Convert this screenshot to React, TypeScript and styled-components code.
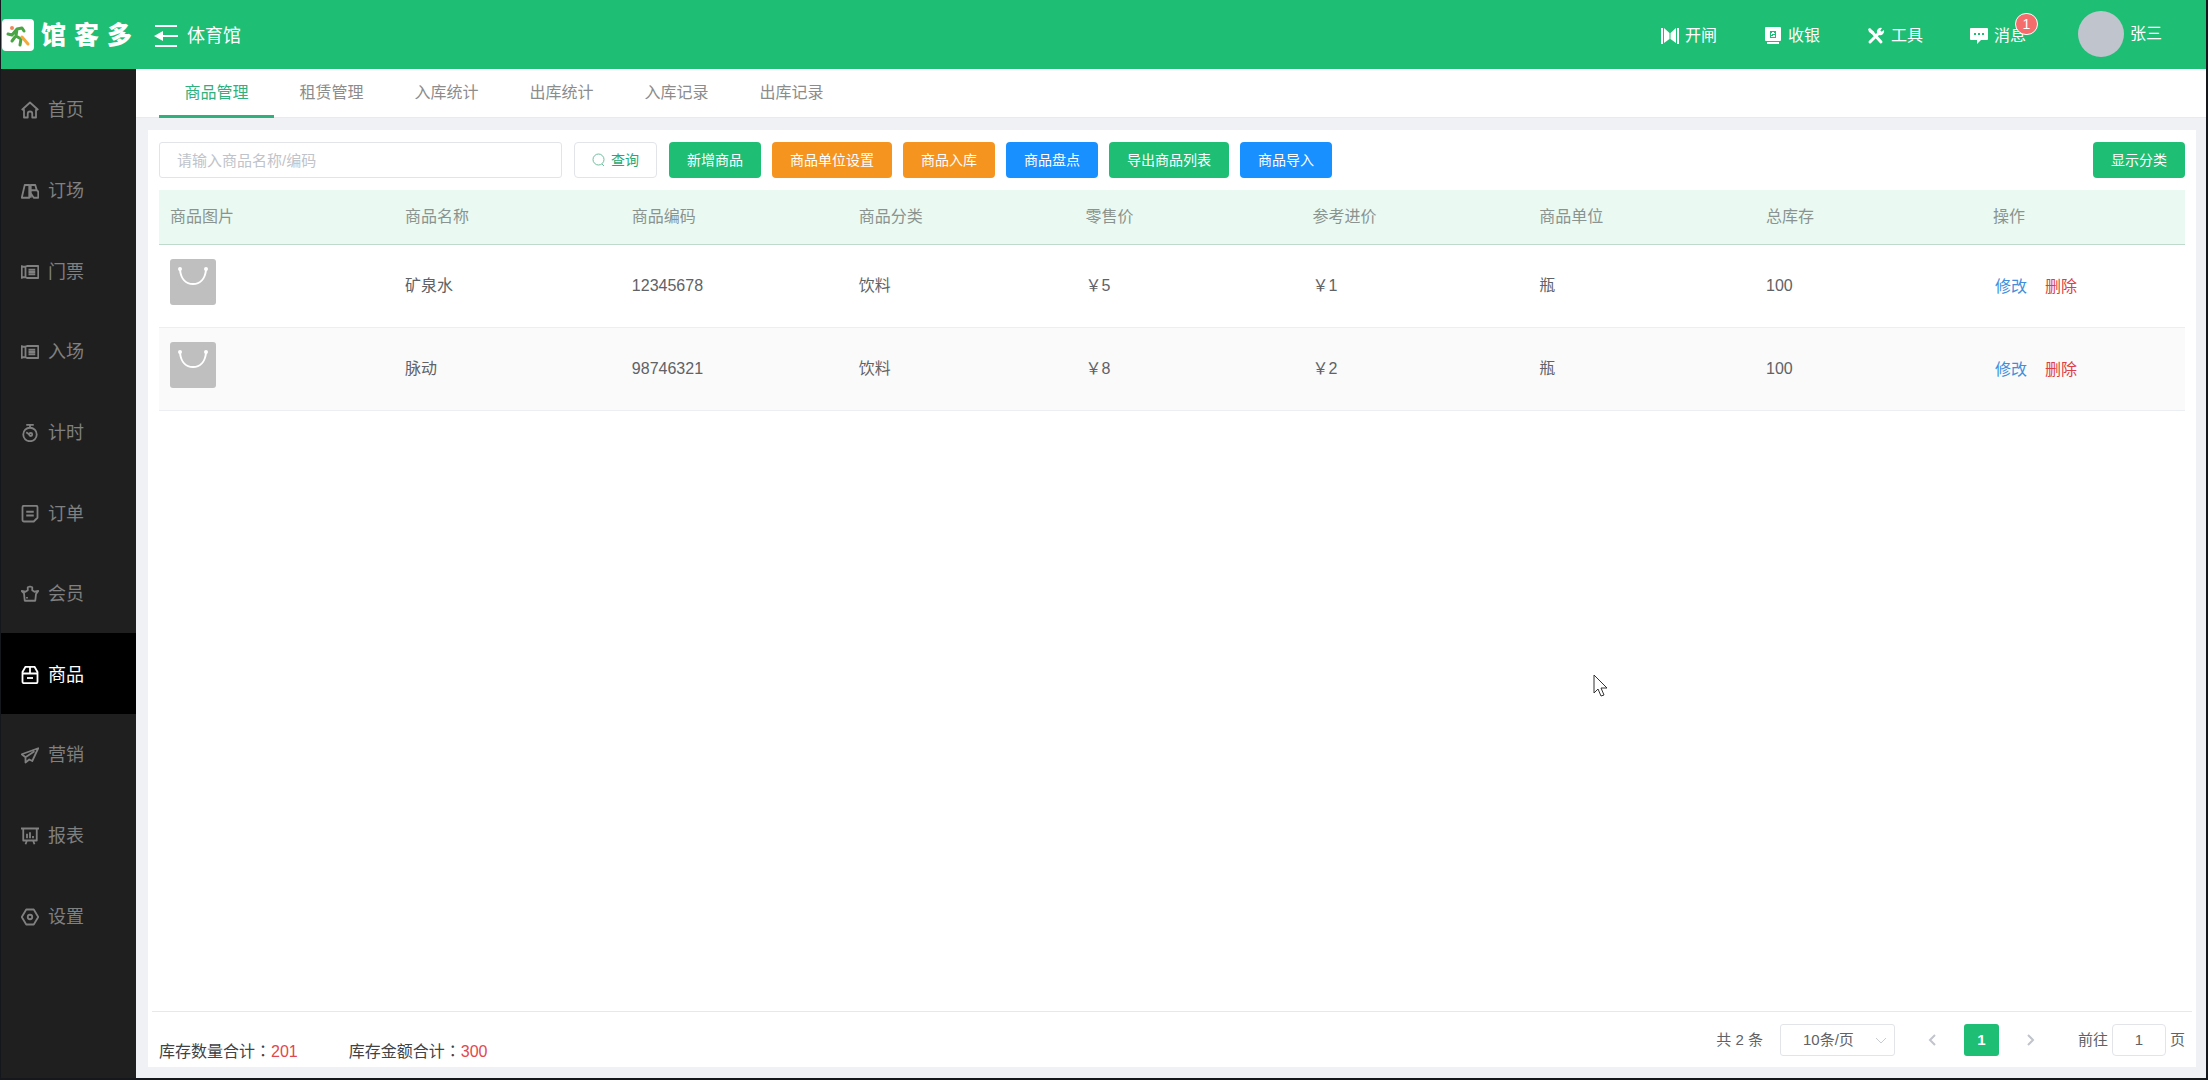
import React, { useState } from "react";
import styled, { createGlobalStyle } from "styled-components";

const GlobalStyle = createGlobalStyle`
  *, *::before, *::after { box-sizing: border-box; }
  body { margin: 0; }
  body, button, input, select {
    font-family: "Liberation Sans", "Noto Sans CJK SC", sans-serif;
  }
  button { cursor: pointer; }
`;

const Shell = styled.div`
  position: relative;
  display: flex;
  flex-direction: column;
  min-height: 100vh;
  border: solid #14181c;
  border-width: 0 2px 2px 1px;
  background: #eff1f4;
  color: #606266;
  font-size: 16px;
  line-height: 24px;
`;

/* ---------- top bar ---------- */

const TopBar = styled.header`
  display: flex;
  align-items: center;
  height: 69px;
  padding-right: 44px;
  background: #1fbe75;
  color: #fff;
`;

const Brand = styled.div`
  display: flex;
  align-items: center;
  gap: 7px;
  padding-left: 1px;
`;

const BrandName = styled.div`
  display: flex;
  gap: 8px;
  font-size: 25px;
  line-height: 32px;
  font-weight: 900;
`;

const VenueButton = styled.button`
  display: flex;
  align-items: center;
  gap: 9px;
  margin-left: 22px;
  padding: 2px 0 0;
  border: 0;
  background: none;
  color: inherit;
  font-size: 18px;
  line-height: 24px;
`;

const TopActions = styled.div`
  display: flex;
  align-items: center;
  gap: 47px;
  margin-left: auto;
`;

const TopAction = styled.button`
  position: relative;
  display: flex;
  align-items: center;
  gap: 6px;
  padding: 2px 0 0;
  border: 0;
  background: none;
  color: inherit;
  font-size: 16px;
  line-height: 24px;
`;

const Badge = styled.span`
  position: absolute;
  top: -9px;
  right: -12px;
  width: 23px;
  height: 22px;
  border: 1px solid #fff;
  border-radius: 11px;
  background: #f56c6c;
  font-size: 14px;
  line-height: 20px;
  text-align: center;
`;

const UserBox = styled.div`
  display: flex;
  align-items: center;
  gap: 6px;
  margin-left: 52px;
  padding-bottom: 2px;
`;

const Avatar = styled.div`
  width: 46px;
  height: 46px;
  border-radius: 50%;
  background: #c0c4cc;
`;

/* ---------- body ---------- */

const Body = styled.div`
  display: flex;
  flex: 1;
`;

const Sidebar = styled.nav`
  display: flex;
  flex-direction: column;
  flex: 0 0 135px;
  padding-bottom: 122px;
  background: #1f1f1f;
`;

const NavLink = styled.a<{ $active: boolean }>`
  display: flex;
  flex: 1;
  align-items: center;
  gap: 9px;
  padding: 2px 0 0 20px;
  background: ${(p) => (p.$active ? "#000" : "transparent")};
  color: ${(p) => (p.$active ? "#fff" : "#808080")};
  font-size: 18px;
  line-height: 24px;
  text-decoration: none;
`;

const Main = styled.main`
  display: flex;
  flex: 1;
  flex-direction: column;
  min-width: 0;
`;

const Tabs = styled.div`
  display: flex;
  height: 49px;
  padding-left: 23px;
  background: #fff;
  border-bottom: 1px solid #e8eaee;
`;

const Tab = styled.button<{ $active: boolean }>`
  width: 115px;
  height: 49px;
  padding: 1px 0 0;
  border: 0;
  border-bottom: 3px solid ${(p) => (p.$active ? "#2fb07c" : "transparent")};
  background: none;
  color: ${(p) => (p.$active ? "#2fb07c" : "#8c8c8c")};
  font-size: 16px;
  line-height: 24px;
`;

const Card = styled.section`
  display: flex;
  flex: 1;
  flex-direction: column;
  margin: 12px 10px 11px 12px;
  background: #fff;
`;

const Toolbar = styled.div`
  display: flex;
  gap: 12px;
  padding: 12px 11px;
`;

const ActionGroup = styled.div`
  display: flex;
  gap: 11px;
`;

const SearchInput = styled.input`
  width: 403px;
  height: 36px;
  padding: 0 17px;
  border: 1px solid #e2e4e8;
  border-radius: 3px;
  background: #fff;
  color: #606266;
  font-size: 15px;
  &::placeholder { color: #bfc3ca; opacity: 1; }
`;

const tones = { green: "#1fbe75", orange: "#f5941f", blue: "#1890ff" };

const ActionButton = styled.button<{ $tone: keyof typeof tones }>`
  height: 36px;
  padding: 0 18px;
  border: 0;
  border-radius: 4px;
  background: ${(p) => tones[p.$tone]};
  color: #fff;
  font-size: 14px;
  line-height: 20px;
  white-space: nowrap;
`;

const QueryButton = styled.button`
  display: flex;
  align-items: center;
  gap: 6px;
  height: 36px;
  padding: 0 17px;
  border: 1px solid #e2e4e8;
  border-radius: 4px;
  background: #fff;
  color: #27a873;
  font-size: 14px;
  line-height: 20px;
`;

const Spacer = styled.div`
  flex: 1;
`;

const TableArea = styled.div`
  flex: 1;
  padding: 0 11px;
`;

const Table = styled.table`
  width: 100%;
  table-layout: fixed;
  border-collapse: separate;
  border-spacing: 0;
`;

const ImageCol = styled.col`
  width: 235px;
`;

const ActionCol = styled.col`
  width: 203px;
`;

const HeadCell = styled.th`
  height: 55px;
  padding: 0 11px 1px;
  border-bottom: 1px solid #bfd9cc;
  background: #eafaf2;
  color: #8a938f;
  font-weight: 400;
  text-align: left;
`;

const Row = styled.tr`
  &:nth-child(even) { background: #fafafa; }
`;

const Cell = styled.td`
  height: 83px;
  padding: 0 11px;
  border-bottom: 1px solid #ebeef2;
`;

const Thumb = styled.svg`
  display: block;
  width: 46px;
  height: 46px;
  margin-bottom: 8px;
`;

const RowLinks = styled.div`
  display: flex;
  gap: 18px;
  padding: 1px 0 0 2px;
`;

const RowLink = styled.a<{ $danger?: boolean }>`
  color: ${(p) => (p.$danger ? "#dc4046" : "#3f8fdc")};
  text-decoration: none;
`;

const Footer = styled.footer`
  display: flex;
  justify-content: space-between;
  align-items: center;
  height: 56px;
  margin: 0 4px;
  padding: 0 7px;
  border-top: 1px solid #e6e8ec;
`;

const Totals = styled.div`
  display: flex;
  align-self: flex-end;
  gap: 51px;
  padding-bottom: 3px;
  color: #404246;
`;

const Colon = styled.span`
  font-family: "Noto Sans CJK TC", sans-serif;
`;

const Amount = styled.span`
  color: #e0484e;
`;

const Pager = styled.div`
  display: flex;
  align-items: center;
  font-size: 15px;
`;

const SizeBox = styled.div`
  position: relative;
  margin: 0 20px 0 17px;
`;

const SizeSelect = styled.select`
  appearance: none;
  width: 115px;
  height: 32px;
  padding: 0 22px;
  border: 1px solid #e2e4e8;
  border-radius: 3px;
  background: #fff;
  color: #606266;
  font-size: 15px;
`;

const SizeArrow = styled.svg`
  position: absolute;
  top: 10px;
  right: 8px;
  pointer-events: none;
`;

const PageStep = styled.button`
  display: flex;
  align-items: center;
  justify-content: center;
  width: 34px;
  height: 32px;
  padding: 0;
  border: 0;
  background: none;
  color: #c0c4cc;
`;

const PageNumber = styled.button`
  width: 35px;
  height: 32px;
  margin: 0 15px;
  padding: 0;
  border: 0;
  border-radius: 3px;
  background: #1fbe75;
  color: #fff;
  font-size: 15px;
  font-weight: 700;
`;

const JumpLabel = styled.label`
  margin-left: 30px;
`;

const JumpInput = styled.input`
  width: 54px;
  height: 32px;
  margin: 0 4px;
  padding: 0;
  border: 1px solid #e2e4e8;
  border-radius: 4px;
  color: #606266;
  font-size: 15px;
  text-align: center;
`;

const Pointer = styled.svg`
  position: absolute;
  top: 674px;
  left: 72.2%;
  pointer-events: none;
`;

/* ---------- drawings ---------- */

const LogoMark = () => (
  <svg width="32" height="32" viewBox="0 0 32 32" aria-hidden="true">
    <rect width="32" height="32" rx="4" fill="#fff" />
    <circle cx="10" cy="9" r="2" fill="#f0875a" />
    <path d="M6 15l4 1 5-6 5-1 2 3M15 10l-1 7 5 3-1 6M13 18l-3 4" fill="none" stroke="#4aa544" strokeWidth="3" strokeLinecap="round" strokeLinejoin="round" />
    <path d="M20 18l6 7" stroke="#f3a93c" strokeWidth="3" strokeLinecap="round" />
  </svg>
);

const FoldIcon = () => (
  <svg width="24" height="22" viewBox="0 0 24 22" fill="none" stroke="#fff" strokeWidth="2" aria-hidden="true">
    <path d="M1 1h22M8 11h16M1 21h22" />
    <path d="M0 11l9-5v10z" fill="#fff" stroke="none" />
  </svg>
);

const topIcons: Record<string, React.ReactNode> = {
  gate: (
    <path d="M0 1h2v16H0zM16 1h2v16h-2zM3 1l5.500 5v6L3 16zM15 1L9.500 6v6l5.500 4z" />
  ),
  cash: (
    <>
      <path fillRule="evenodd" d="M2 0h14a1 1 0 011 1v12a1 1 0 01-1 1H2a1 1 0 01-1-1V1a1 1 0 011-1zM6 4v7h6V4z" />
      <path d="M8 5h2v1h1v1H8v1h3v2H7V9h2V8H7V6h1zM3 15h12v2H3z" />
    </>
  ),
  tools: (
    <>
      <path d="M3 15L13 5M5 5l9 10" fill="none" stroke="#fff" strokeWidth="3" strokeLinecap="round" />
      <path d="M1 2l2-1 4 4-2 2-3-2zM17 3l-3 2-1-1 2-3a4 4 0 00-5 5l2 2a4 4 0 005-5z" />
    </>
  ),
  chat: (
    <path fillRule="evenodd" d="M1 1h16a1 1 0 011 1v10a1 1 0 01-1 1h-6l-4 4v-4H1a1 1 0 01-1-1V2a1 1 0 011-1zM4 6v2h2V6zM8 6v2h2V6zM12 6v2h2V6z" />
  ),
};

const TopIcon = ({ name }: { name: string }) => (
  <svg width="18" height="18" viewBox="0 0 18 18" fill="#fff" aria-hidden="true">
    {topIcons[name]}
  </svg>
);

const navIcons: Record<string, React.ReactNode> = {
  home: <path d="M1 12L12 2l11 10M4 11v11h5v-5a3 3 0 016 0v5h5V11" />,
  court: <path d="M5 4h6v17H1zM13 4h6l2 7h-8zM13 11h7a3 3 0 013 3v7h-6l-4-6zM13 4v17" />,
  ticket: <path d="M1 3v18M1 5h5v14H1M6 5l2-1h15v16H8l-2-1M10 9h9M10 12h9M10 15h9" />,
  timer: (
    <>
      <circle cx="12" cy="14" r="9" />
      <path d="M7 1h10M12 1v4M7 11l4 3" />
      <circle cx="13" cy="14" r="2" />
    </>
  ),
  order: <path d="M4 1h16a2 2 0 012 2v14l-5 5H4a2 2 0 01-2-2V3a2 2 0 012-2zM7 9h10M7 14h10" />,
  member: <path d="M4 11L1 8l5 1 3-2V3l3-1 3 1v4l3 2 5-1-3 4-1 9H5zM8 16v2" />,
  goods: (
    <>
      <path d="M6 1h12l4 7v13a2 2 0 01-2 2H4a2 2 0 01-2-2V8zM2 10h20M12 1v9" />
      <path d="M8 16h8" />
    </>
  ),
  send: <path d="M1 11L23 3l-8 17-4-2-5 4v-7zM6 15l12-8" />,
  report: <path d="M0 2h24M3 2v16h18V2M8 9v6M12 7v8M16 12v3M8 18l-2 5M16 18l2 5" />,
  settings: (
    <>
      <path d="M7 2h10l6 10-6 10H7L1 12z" />
      <circle cx="12" cy="12" r="3" />
    </>
  ),
};

const NavIcon = ({ name }: { name: string }) => (
  <svg width="18" height="18" viewBox="0 0 24 24" fill="none" stroke="currentColor" strokeWidth="2.4" strokeLinejoin="round" aria-hidden="true">
    {navIcons[name]}
  </svg>
);

const BagThumb = () => (
  <Thumb viewBox="0 0 46 46" role="img" aria-label="商品图片">
    <rect width="46" height="46" rx="3" fill="#bfbfbf" />
    <path d="M10 11c1 9 6 14 13 14s12-5 13-14" fill="none" stroke="#fff" strokeWidth="2" />
    <circle cx="10" cy="10" r="2" fill="#fff" />
    <circle cx="36" cy="10" r="2" fill="#fff" />
  </Thumb>
);

/* ---------- data ---------- */

const topActions = [
  { icon: "gate", label: "开闸" },
  { icon: "cash", label: "收银" },
  { icon: "tools", label: "工具" },
  { icon: "chat", label: "消息", count: 1 },
];

const navItems = [
  { icon: "home", label: "首页" },
  { icon: "court", label: "订场" },
  { icon: "ticket", label: "门票" },
  { icon: "ticket", label: "入场" },
  { icon: "timer", label: "计时" },
  { icon: "order", label: "订单" },
  { icon: "member", label: "会员" },
  { icon: "goods", label: "商品" },
  { icon: "send", label: "营销" },
  { icon: "report", label: "报表" },
  { icon: "settings", label: "设置" },
];

const tabs = ["商品管理", "租赁管理", "入库统计", "出库统计", "入库记录", "出库记录"];

const actions: { label: string; tone: keyof typeof tones }[] = [
  { label: "新增商品", tone: "green" },
  { label: "商品单位设置", tone: "orange" },
  { label: "商品入库", tone: "orange" },
  { label: "商品盘点", tone: "blue" },
  { label: "导出商品列表", tone: "green" },
  { label: "商品导入", tone: "blue" },
];

const columns = ["商品图片", "商品名称", "商品编码", "商品分类", "零售价", "参考进价", "商品单位", "总库存", "操作"];

const products = [
  { name: "矿泉水", code: "12345678", category: "饮料", price: 5, cost: 1, unit: "瓶", stock: 100 },
  { name: "脉动", code: "98746321", category: "饮料", price: 8, cost: 2, unit: "瓶", stock: 100 },
];

const YUAN = "\uFFE5";
const COLON = "\uFF1A";

export default function App() {
  const [tab, setTab] = useState(tabs[0]);
  const [keyword, setKeyword] = useState("");
  const [page, setPage] = useState("1");

  return (
    <Shell>
      <GlobalStyle />
      <TopBar>
        <Brand>
          <LogoMark />
          <BrandName>
            <span>馆</span>
            <span>客</span>
            <span>多</span>
          </BrandName>
        </Brand>
        <VenueButton type="button">
          <FoldIcon />
          体育馆
        </VenueButton>
        <TopActions>
          {topActions.map((a) => (
            <TopAction key={a.label} type="button">
              <TopIcon name={a.icon} />
              {a.label}
              {a.count && <Badge>{a.count}</Badge>}
            </TopAction>
          ))}
        </TopActions>
        <UserBox>
          <Avatar />
          张三
        </UserBox>
      </TopBar>

      <Body>
        <Sidebar>
          {navItems.map((n) => (
            <NavLink key={n.label} href="#" $active={n.label === "商品"}>
              <NavIcon name={n.icon} />
              {n.label}
            </NavLink>
          ))}
        </Sidebar>

        <Main>
          <Tabs>
            {tabs.map((t) => (
              <Tab key={t} type="button" $active={t === tab} onClick={() => setTab(t)}>
                {t}
              </Tab>
            ))}
          </Tabs>

          <Card>
            <Toolbar>
              <SearchInput
                aria-label="商品名称/编码"
                placeholder="请输入商品名称/编码"
                value={keyword}
                onChange={(e) => setKeyword(e.target.value)}
              />
              <QueryButton type="button">
                <svg width="13" height="14" viewBox="0 0 13 14" fill="none" stroke="#6fbf9e" aria-hidden="true">
                  <circle cx="6.500" cy="6.500" r="5.500" />
                  <path d="M10 11l2 2" />
                </svg>
                查询
              </QueryButton>
              <ActionGroup>
                {actions.map((a) => (
                  <ActionButton key={a.label} type="button" $tone={a.tone}>
                    {a.label}
                  </ActionButton>
                ))}
              </ActionGroup>
              <Spacer />
              <ActionButton type="button" $tone="green">显示分类</ActionButton>
            </Toolbar>

            <TableArea>
              <Table>
                <colgroup>
                  <ImageCol />
                  {columns.slice(1, -1).map((c) => (
                    <col key={c} />
                  ))}
                  <ActionCol />
                </colgroup>
                <thead>
                  <tr>
                    {columns.map((c) => (
                      <HeadCell key={c} scope="col">{c}</HeadCell>
                    ))}
                  </tr>
                </thead>
                <tbody>
                  {products.map((p) => (
                    <Row key={p.code}>
                      <Cell><BagThumb /></Cell>
                      <Cell>{p.name}</Cell>
                      <Cell>{p.code}</Cell>
                      <Cell>{p.category}</Cell>
                      <Cell>{YUAN}{p.price}</Cell>
                      <Cell>{YUAN}{p.cost}</Cell>
                      <Cell>{p.unit}</Cell>
                      <Cell>{p.stock}</Cell>
                      <Cell>
                        <RowLinks>
                          <RowLink href="#">修改</RowLink>
                          <RowLink href="#" $danger>删除</RowLink>
                        </RowLinks>
                      </Cell>
                    </Row>
                  ))}
                </tbody>
              </Table>
            </TableArea>

            <Footer>
              <Totals>
                <span>库存数量合计<Colon>{COLON}</Colon><Amount>201</Amount></span>
                <span>库存金额合计<Colon>{COLON}</Colon><Amount>300</Amount></span>
              </Totals>
              <Pager>
                <span>共 2 条</span>
                <SizeBox>
                  <SizeSelect aria-label="每页条数" defaultValue="10">
                    <option value="10">10条/页</option>
                    <option value="20">20条/页</option>
                  </SizeSelect>
                  <SizeArrow width="12" height="12" viewBox="0 0 12 12" fill="none" stroke="#c8ccd2" aria-hidden="true">
                    <path d="M1 4l5 5 5-5" />
                  </SizeArrow>
                </SizeBox>
                <PageStep type="button" aria-label="上一页">
                  <svg width="8" height="12" viewBox="0 0 8 12" fill="none" stroke="currentColor" strokeWidth="2">
                    <path d="M7 1L2 6l5 5" />
                  </svg>
                </PageStep>
                <PageNumber type="button">1</PageNumber>
                <PageStep type="button" aria-label="下一页">
                  <svg width="8" height="12" viewBox="0 0 8 12" fill="none" stroke="currentColor" strokeWidth="2">
                    <path d="M1 1l5 5-5 5" />
                  </svg>
                </PageStep>
                <JumpLabel htmlFor="jump">前往</JumpLabel>
                <JumpInput id="jump" value={page} onChange={(e) => setPage(e.target.value)} />
                <span>页</span>
              </Pager>
            </Footer>
          </Card>
        </Main>
      </Body>

      <Pointer width="15" height="23" viewBox="0 0 15 23" fill="#fff" stroke="#333" aria-hidden="true">
        <path d="M1 1v18l4-4 3 7 3-1-3-7h6z" />
      </Pointer>
    </Shell>
  );
}
